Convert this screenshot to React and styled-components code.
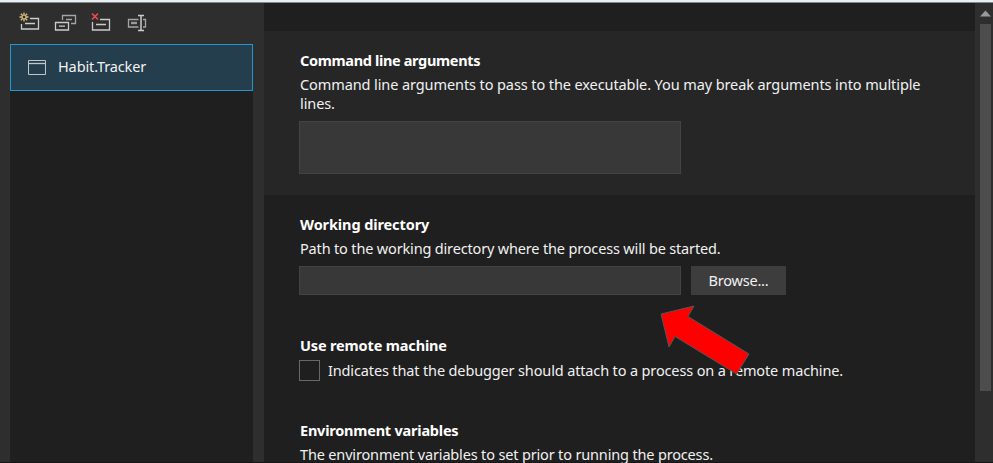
import React from "react";
import styled, { createGlobalStyle } from "styled-components";

const Global = createGlobalStyle`
  * { box-sizing: border-box; }
  body { margin: 0; background: #1f1f1f; overflow: hidden; }
`;
const Window = styled.div`
  position: relative;
  display: flex;
  flex-direction: column;
  width: 993px;
  height: 463px;
  overflow: hidden;
  background: #2e2e2e;
  color: #f1f1f1;
  font: 14.5px/19px "Noto Sans", "Open Sans", sans-serif;
`;
const TopEdge = styled.div`
  flex: none;
  height: 3px;
  background: #e8eff6;
  border-bottom: 1px solid #85878a;
`;
const Body = styled.div`
  display: flex;
  flex: 1;
  min-height: 0;
  border-bottom: 1px solid #171717;
`;
const Sidebar = styled.aside`
  display: flex;
  flex-direction: column;
  width: 264px;
  padding: 0 11px 0 10px;
`;
const Toolbar = styled.div`
  display: flex;
  gap: 12px;
  height: 41px;
  padding: 8px 0 0 8px;
`;
const ToolButton = styled.button`
  display: flex;
  width: 24px;
  height: 24px;
  padding: 0;
  border: 0;
  background: none;
`;
const ProfileList = styled.div`
  flex: 1;
  background: #1f1f1f;
`;
const Profile = styled.div`
  display: flex;
  align-items: flex-start;
  gap: 11px;
  height: 47px;
  padding: 12px 0 0 17px;
  background: #243e4d;
  border: 1px solid #2595ce;
`;
const ProfileIcon = styled.svg`
  margin-top: 3px;
`;
const Main = styled.main`
  width: 711px;
  padding-top: 28px;
  background: #1f1f1f;
`;
const Section = styled.section`
  height: ${(p) => p.$height}px;
  padding: ${(p) => p.$top}px 35px 0;
  background: ${(p) => (p.$active ? "#262626" : "#1f1f1f")};
`;
const Label = styled.div`
  white-space: pre-line;
  height: ${(p) => p.$height || 19}px;
  letter-spacing: ${(p) => p.$track || 0}px;
`;
const Description = styled(Label)`
  padding-left: 1px;
`;
const Title = styled(Description)`
  font-weight: 700;
  color: #fff;
  height: 24px;
`;
const Field = styled.div`
  width: 382px;
  height: ${(p) => p.$height}px;
  background: #383838;
  border: 1px solid #434343;
`;
const FieldRow = styled.div`
  display: flex;
  gap: 10px;
  margin-top: ${(p) => p.$gap}px;
`;
const Browse = styled.button`
  width: 95px;
  height: 29px;
  padding: 0;
  border: 0;
  background: #3d3d3d;
  color: #f1f1f1;
  font: inherit;
  display: flex;
  justify-content: center;
  align-items: center;
`;
const CheckRow = styled.label`
  display: flex;
  align-items: center;
  gap: 8px;
  height: 21px;
`;
const Checkbox = styled.span`
  width: 21px;
  height: 21px;
  border: 1px solid #686868;
`;
const Scrollbar = styled.div`
  display: flex;
  flex-direction: column;
  width: 18px;
  padding: 7px 2px 0 5px;
`;
const Thumb = styled.div`
  height: 367px;
  margin-top: 7px;
  background: #4d4d4d;
`;
const Pointer = styled.svg`
  position: absolute;
  left: 655px;
  top: 300px;
`;

function Icon({ children }) {
  return (
    <svg width="24" height="24" viewBox="0 0 24 24" fill="none" stroke="#cbcbcb" strokeWidth="1.3">
      {children}
    </svg>
  );
}

const tools = [
  {
    name: "New",
    art: (
      <>
        <path d="M12 7.5h8.5v10.5h-17v-5M7 12.5h10" />
        <path d="M6 1.5v3M6 7.5v3M1.5 6h3M7.5 6h3M2.8 2.8l2 2M7.2 7.2l2 2M9.2 2.8l-2 2M4.8 7.2l-2 2" stroke="#dcc07c" />
        <circle cx="6" cy="6" r="2" stroke="#dcc07c" strokeWidth=".9" />
      </>
    ),
  },
  {
    name: "Duplicate",
    art: (
      <>
        <path d="M8.5 9V4.5h13v8H17M12 8.5h6" stroke="#a5a5a5" />
        <path d="M1.5 11.5h13v7.5h-13zM5 15.2h6" />
      </>
    ),
  },
  {
    name: "Delete",
    art: (
      <>
        <path d="M10 8.5h9.5v10.5h-17v-8M6 13.5h10" />
        <path d="M2 2.5l6 6M8 2.5L2 8.5" stroke="#ee4a52" strokeWidth="1.6" />
      </>
    ),
  },
  {
    name: "Rename",
    art: (
      <>
        <path d="M12.5 8.5H2.5v7.5h10M17 8.5h2.5V16H17" stroke="#a5a5a5" />
        <path d="M5 12h6" stroke="#999" strokeWidth="2.4" />
        <path d="M12 4.5h6M15 4.5v15M12 19.5h6" strokeWidth="1.5" />
      </>
    ),
  },
];

export default function App() {
  return (
    <>
      <Global />
      <Window>
        <TopEdge />
        <Body>
          <Sidebar>
            <Toolbar>
              {tools.map((t) => (
                <ToolButton key={t.name} aria-label={t.name}>
                  <Icon>{t.art}</Icon>
                </ToolButton>
              ))}
            </Toolbar>
            <ProfileList>
              <Profile>
                <ProfileIcon width="19" height="16" fill="none" stroke="#c0c6ca">
                  <path d="M.5 .5h17v14H.5z" />
                  <path d="M1 3.5h16.5" strokeWidth="1.3" />
                </ProfileIcon>
                <Label $track={-0.12}>Habit.Tracker</Label>
              </Profile>
            </ProfileList>
          </Sidebar>
          <Main>
            <Section $active $height={164} $top={20}>
              <Title $track={-0.34}>Command line arguments</Title>
              <Description $height={38} $track={-0.095}>
                {"Command line arguments to pass to the executable. You may break arguments into multiple\nlines."}
              </Description>
              <FieldRow $gap={8}>
                <Field $height={53} />
              </FieldRow>
            </Section>
            <Section $height={120} $top={20}>
              <Title $track={-0.1}>Working directory</Title>
              <Description $track={-0.165}>Path to the working directory where the process will be started.</Description>
              <FieldRow $gap={8}>
                <Field $height={29} />
                <Browse><Label $track={-0.2}>Browse...</Label></Browse>
              </FieldRow>
            </Section>
            <Section $height={85} $top={21}>
              <Title $track={-0.15}>Use remote machine</Title>
              <CheckRow>
                <Checkbox />
                <Label $track={-0.14}>Indicates that the debugger should attach to a process on a remote machine.</Label>
              </CheckRow>
            </Section>
            <Section $height={62} $top={21}>
              <Title $track={-0.22}>Environment variables</Title>
              <Description $track={-0.16}>The environment variables to set prior to running the process.</Description>
            </Section>
          </Main>
          <Scrollbar>
            <svg width="11" height="7"><path d="M0 6.5L5.5 .5 11 6.5z" fill="#999" /></svg>
            <Thumb />
          </Scrollbar>
        </Body>
        <Pointer width="100" height="80">
          <path d="M6 14L39 6 33 16.5 94 54 81.5 74 20 36.5 14 47z" fill="#f00" stroke="#555" />
        </Pointer>
      </Window>
    </>
  );
}
